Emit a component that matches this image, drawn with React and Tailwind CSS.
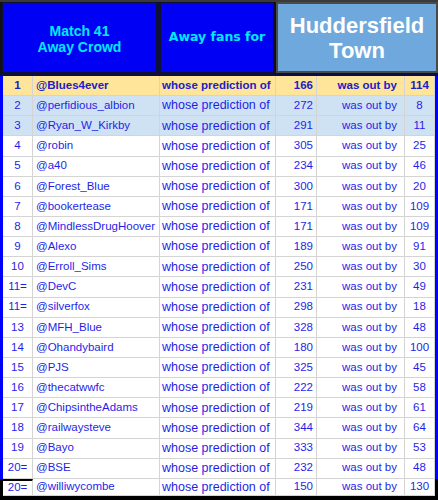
const rows = [
  ["1", "@Blues4ever", 166, 114],
  ["2", "@perfidious_albion", 272, 8],
  ["3", "@Ryan_W_Kirkby", 291, 11],
  ["4", "@robin", 305, 25],
  ["5", "@a40", 234, 46],
  ["6", "@Forest_Blue", 300, 20],
  ["7", "@bookertease", 171, 109],
  ["8", "@MindlessDrugHoover", 171, 109],
  ["9", "@Alexo", 189, 91],
  ["10", "@Erroll_Sims", 250, 30],
  ["11=", "@DevC", 231, 49],
  ["11=", "@silverfox", 298, 18],
  ["13", "@MFH_Blue", 328, 48],
  ["14", "@Ohandybaird", 180, 100],
  ["15", "@PJS", 325, 45],
  ["16", "@thecatwwfc", 222, 58],
  ["17", "@ChipsintheAdams", 219, 61],
  ["18", "@railwaysteve", 344, 64],
  ["19", "@Bayo", 333, 53],
  ["20=", "@BSE", 232, 48],
  ["20=", "@williwycombe", 150, 130],
];

function Row({ r, i }) {
  const first = i === 0;
  const blue = i === 1 || i === 2;
  const last = i === rows.length - 1;
  const bg = first ? "bg-[#ffe599]" : blue ? "bg-[#cfe2f3]" : "bg-white";
  const txt = first ? "font-bold text-[#2020c8]" : "text-[#1f1fe8]";
  const h = last ? "h-[17px]" : "h-[20.15px]";
  const cell = "border-r border-b border-[#d4d4d4] flex items-center overflow-hidden whitespace-nowrap";
  return (
    <div className={`flex ${h} ${bg} ${txt} text-[11.5px] leading-none`}>
      <div className={`w-[3px] shrink-0 ${last ? "bg-black" : "bg-[#0000ff]"}`} />
      <div className={`w-[30px] shrink-0 justify-center ${cell} ${last ? "border-t-2 border-t-black" : ""}`}>{r[0]}</div>
      <div className={`w-[127px] shrink-0 pl-[3px] ${cell}`}>{r[1]}</div>
      <div className={`w-[116px] shrink-0 pl-[2px] ${first ? "text-[11.5px]" : "text-[12.5px]"} ${cell}`}>whose prediction of</div>
      <div className={`w-[41px] shrink-0 justify-end pr-[3px] ${cell}`}>{r[2]}</div>
      <div className={`w-[88px] shrink-0 justify-end pr-[7px] ${cell}`}>was out by</div>
      <div className={`w-[30px] shrink-0 justify-center ${cell}`}>{r[3]}</div>
      <div className={`w-[3px] shrink-0 ${last ? "bg-black" : "bg-[#0000ff]"}`} />
    </div>
  );
}

export default function App() {
  return (
    <div className="w-[438px] h-[500px] overflow-hidden bg-white" style={{ fontFamily: '"Liberation Sans", Arial, sans-serif' }}>
      <div className="h-[76px] flex bg-[#0c0c48] border-t-2 border-t-[#3a3a3a] pb-[3px]">
        <div className="w-[2px] shrink-0 bg-[#111]" />
        <div className="w-[155px] shrink-0 bg-[#0000f5] border border-[#101030] flex flex-col items-center justify-center text-[#00e8ff] font-bold text-[14px] leading-[16px] pt-[2px]">
          <div>Match 41</div>
          <div>Away Crowd</div>
        </div>
        <div className="w-[3px] shrink-0 bg-[#0c0c48]" />
        <div className="w-[114px] shrink-0 bg-[#0000f5] border border-[#101030] flex items-center justify-center text-[#00e8ff] font-bold" style={{ fontFamily: '"DejaVu Sans", sans-serif' }}>
          <span className="text-[12.5px]">Away fans for</span>
        </div>
        <div className="w-[2px] shrink-0 bg-[#111]" />
        <div className="flex-1 bg-[#6fa8dc] border-2 border-[#4a4a4a] flex flex-col items-center justify-center text-white font-bold text-[22px] leading-[25px]">
          <div>Huddersfield</div>
          <div>Town</div>
        </div>
      </div>
      <div>
        {rows.map((r, i) => (
          <Row key={i} r={r} i={i} />
        ))}
      </div>
      <div className="h-[4px] bg-black" />
    </div>
  );
}
